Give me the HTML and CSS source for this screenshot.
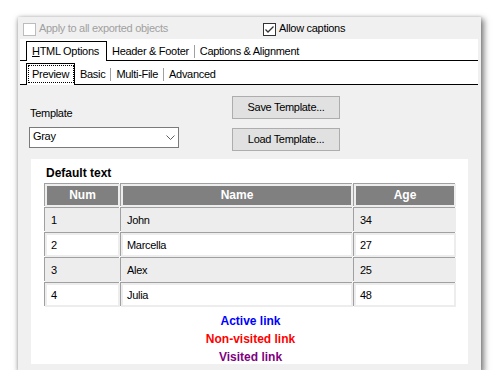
FILE: index.html
```html
<!DOCTYPE html>
<html>
<head>
<meta charset="utf-8">
<link rel="stylesheet" href="styles.css">
</head>
<body>
<div class="stage">
  <div class="window">
    <div class="opts">
      <label class="chk disabled"><span class="box"></span><span class="lbl">Apply to all exported objects</span></label>
      <label class="chk"><span class="box"><svg width="11" height="11" viewBox="0 0 11 11"><polyline points="1.5,5.5 4,8 9.5,2.5" fill="none" stroke="#333" stroke-width="1.3"/></svg></span><span class="lbl">Allow captions</span></label>
    </div>
    <div class="strip strip1">
      <div class="lead"></div>
      <div class="tab sel"><u>H</u>TML Options</div>
      <div class="tab">Header &amp; Footer</div>
      <div class="sep"></div>
      <div class="tab">Captions &amp; Alignment</div>
    </div>
    <div class="strip strip2">
      <div class="lead"></div>
      <div class="tab sel"><span class="focus">Preview</span></div>
      <div class="tab">Basic</div>
      <div class="sep"></div>
      <div class="tab">Multi-File</div>
      <div class="sep"></div>
      <div class="tab">Advanced</div>
    </div>
    <div class="form">
      <div class="left">
        <div class="label">Template</div>
        <div class="combo">
          <span class="val">Gray</span>
          <svg class="chev" width="9" height="5" viewBox="0 0 9 5"><polyline points="0.5,0.5 4.5,4.5 8.5,0.5" fill="none" stroke="#606060" stroke-width="1"/></svg>
        </div>
      </div>
      <div class="buttons">
        <div class="btn">Save Template...</div>
        <div class="btn">Load Template...</div>
      </div>
    </div>
    <div class="preview">
      <div class="title">Default text</div>
      <table class="grid">
        <thead>
          <tr><th class="c1">Num</th><th class="c2">Name</th><th class="c3">Age</th></tr>
        </thead>
        <tbody>
          <tr class="odd"><td>1</td><td>John</td><td>34</td></tr>
          <tr class="even"><td>2</td><td>Marcella</td><td>27</td></tr>
          <tr class="odd"><td>3</td><td>Alex</td><td>25</td></tr>
          <tr class="even"><td>4</td><td>Julia</td><td>48</td></tr>
        </tbody>
      </table>
      <div class="links">
        <div class="active">Active link</div>
        <div class="nonvisited">Non-visited link</div>
        <div class="visited">Visited link</div>
      </div>
    </div>
  </div>
</div>
</body>
</html>
```
FILE: styles.css
```css
* { box-sizing: border-box; }
body {
  margin: 0;
  background: #fff;
  font-family: "Liberation Sans", Arial, sans-serif;
  font-size: 11px;
  letter-spacing: -0.3px;
  color: #000;
}
.stage { padding: 17px 0 0 18px; }
.window {
  width: 463px;
  height: 353px;
  background: #f0f0f0;
  box-shadow: 2px 3px 6px 1px rgba(0,0,0,0.5), 0 0 3px rgba(0,0,0,0.15);
  display: flex;
  flex-direction: column;
}

/* checkbox row */
.opts {
  display: grid;
  grid-template-columns: 240px auto;
  height: 22px;
  padding: 6px 0 0 5px;
}
.chk { display: flex; align-items: flex-start; gap: 3px; height: 13px; }
.box {
  width: 13px; height: 13px;
  border: 1px solid #333;
  background: #fff;
  display: flex;
  flex: none;
}
.lbl { line-height: 11px; white-space: nowrap; }
.chk.disabled { color: #a0a0a0; }
.chk.disabled .box { border-color: #bcbcbc; }

/* tab strips */
.strip {
  display: flex;
  align-items: flex-end;
  background: #fff;
  margin: 0 3px 0 2px;
  border-bottom: 1px solid #000;
}
.strip1 { height: 22px; }
.strip2 { height: 24px; }
.lead { width: 6px; flex: none; }
.tab {
  height: 20px;
  margin-bottom: -1px;
  border: 1px solid transparent;
  border-bottom: 0;
  padding: 0 4px;
  line-height: 19px;
  white-space: nowrap;
}
.tab.sel { background: #fff; border-color: #000; }
.strip1 .tab.sel { width: 81px; padding-left: 5px; }
.strip2 .tab { height: 22px; padding-top: 1px; }
.strip2 .tab.sel { width: 49px; padding: 0; }
.focus {
  display: block;
  margin: 1px 0 0 1px;
  width: 46px;
  height: 18px;
  border: 1px dotted #000;
  padding-left: 3px;
  line-height: 17px;
}
.sep { width: 1px; height: 13px; background: #a0a0a0; margin-bottom: 2px; flex: none; }
.strip2 .sep { margin-bottom: 3px; }

/* template form */
.form { display: flex; padding: 11px 0 0 11px; }
.left { width: 150px; display: flex; flex-direction: column; }
.label { margin: 11px 0 7px 1px; line-height: 13px; }
.combo {
  height: 21px;
  border: 1px solid #7a7a7a;
  background: #fff;
  display: flex;
  justify-content: space-between;
  align-items: center;
  padding: 0 3px;
}
.val { align-self: flex-start; line-height: 17px; }
.buttons { margin-left: 53px; display: flex; flex-direction: column; gap: 9px; }
.btn {
  width: 108px;
  height: 23px;
  background: #e1e1e1;
  border: 1px solid #adadad;
  text-align: center;
  line-height: 21px;
}

/* preview */
.preview {
  margin: 8px 13px 0;
  height: 205px;
  background: #fff;
  padding: 7px 0 0 13px;
}
.title { font-weight: bold; font-size: 12px; line-height: 14px; padding-left: 2px; letter-spacing: 0; }
.grid {
  margin-top: 3px;
  border-spacing: 1px;
  width: 413px;
  table-layout: fixed;
}
.grid th, .grid td {
  border: 2px solid #ededed;
  box-shadow: -1px -1px 0 #a0a0a0;
  padding: 0;
}
.grid th {
  background: #808080;
  color: #fff;
  font-weight: bold;
  font-size: 12px;
  letter-spacing: 0;
  line-height: 19px;
  text-align: center;
}
.grid th.c1 { width: 75px; }
.grid th.c2 { width: 232px; }
.grid th.c3 { width: 102px; }
.grid td {
  line-height: 19px;
  padding: 1px 0 0 4px;
  text-align: left;
}
.grid tr.odd td { background: #ededed; }
.grid tr.even td { background: #fff; }
.links {
  width: 413px;
  margin-top: 4px;
  text-align: center;
  font-weight: bold;
  font-size: 12px;
  letter-spacing: 0;
  line-height: 18px;
}
.active { color: #0000ff; }
.nonvisited { color: #ff0000; }
.visited { color: #800080; }
```
